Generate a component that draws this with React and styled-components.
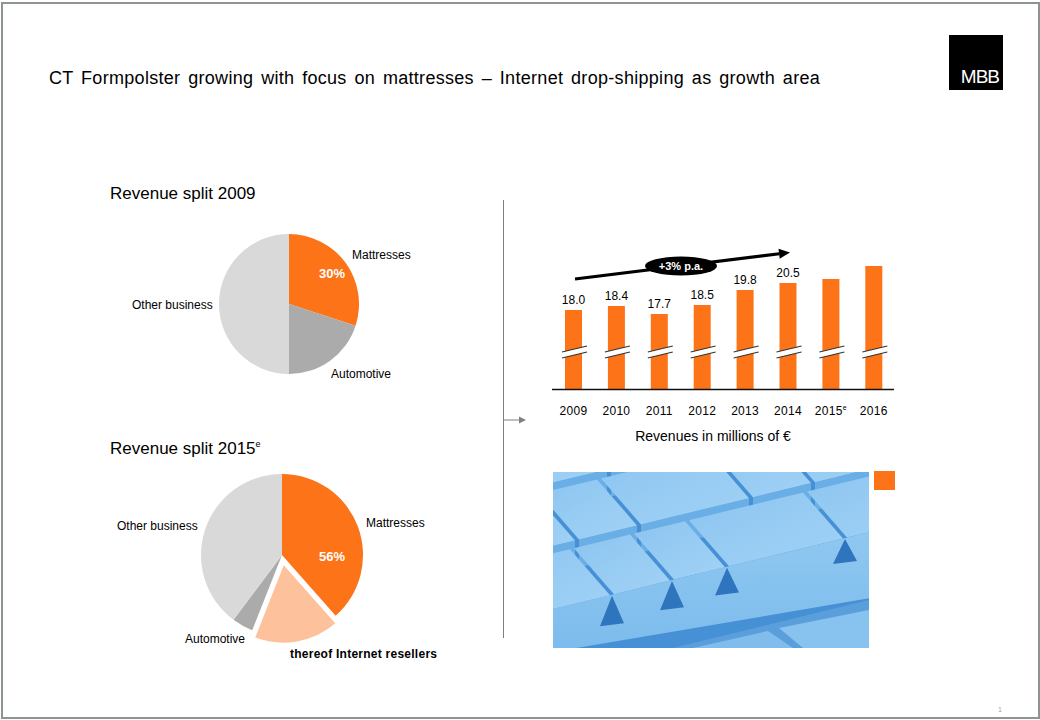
import React from 'react';
import styled, { createGlobalStyle } from 'styled-components';

const ORANGE = '#fc7318';
const PEACH = '#fdc29c';
const MID_GREY = '#ababab';
const LIGHT_GREY = '#d9d9d9';

const GlobalStyle = createGlobalStyle`
  body {
    margin: 0;
    background: #fff;
    font-family: "Liberation Sans", Arial, sans-serif;
    color: #000;
  }
`;

const Slide = styled.div`
  box-sizing: border-box;
  width: 1039px;
  height: 717px;
  margin: 2px 0 0 1px;
  border: 2px solid #8e9393;
  display: flex;
  flex-direction: column;
`;

const Header = styled.header`
  display: flex;
  justify-content: space-between;
  align-items: flex-end;
  padding: 31px 35px 0 46px;
`;

const Title = styled.h1`
  margin: 0 0 1px;
  font-size: 18px;
  line-height: 22px;
  font-weight: normal;
  letter-spacing: 0.3px;
  word-spacing: 2.5px;
`;

const Logo = styled.div`
  width: 54px;
  height: 55px;
  background: #000;
  color: #fff;
  display: flex;
  align-items: flex-end;
  justify-content: flex-end;
  box-sizing: border-box;
  padding: 0 4px 3px 0;
  font-size: 19px;
  letter-spacing: -1px;
  line-height: 20px;
`;

const Main = styled.main`
  display: flex;
  align-items: flex-start;
  margin-top: 94px;
  padding-left: 107px;
`;

const LeftColumn = styled.section`
  width: 393px;
  display: flex;
  flex-direction: column;
`;

const SplitHeading = styled.h2`
  margin: 0;
  font-size: 17px;
  line-height: 20px;
  font-weight: normal;

  sup {
    font-size: 9px;
    vertical-align: 7px;
    line-height: 0;
  }
`;

const ChartSvg = styled.svg`
  display: block;
  font-family: "Liberation Sans", Arial, sans-serif;
`;

const Divider = styled.div`
  position: relative;
  width: 0;
  height: 438px;
  margin-top: 16px;
  border-left: 1px solid #7f7f7f;
`;

const DividerArrow = styled.svg`
  position: absolute;
  left: 0;
  top: 214px;
`;

const RightColumn = styled.section`
  width: 360px;
  margin-left: 36px;
  display: flex;
  flex-direction: column;
`;

const Caption = styled.div`
  font-size: 14px;
  line-height: 20px;
  text-align: center;
  padding-right: 14px;
`;

const PhotoRow = styled.div`
  display: flex;
  align-items: flex-start;
  gap: 5px;
  margin: 26px 0 0 13px;
`;

const Marker = styled.div`
  width: 21px;
  height: 19px;
  margin-top: -1px;
  background: ${ORANGE};
`;

const Footer = styled.footer`
  margin-top: auto;
  padding: 0 36px 3px 0;
  text-align: right;
  font-size: 7px;
  line-height: 8px;
  color: #a0a0a0;
`;

// angles in degrees, clockwise from 12 o'clock
const pt = (cx, cy, r, a) => {
  const rad = (a * Math.PI) / 180;
  return [cx + r * Math.sin(rad), cy - r * Math.cos(rad)];
};

const slice = (cx, cy, r, a0, a1) => {
  const [x0, y0] = pt(cx, cy, r, a0);
  const [x1, y1] = pt(cx, cy, r, a1);
  const large = a1 - a0 > 180 ? 1 : 0;
  return `M${cx},${cy} L${x0},${y0} A${r},${r} 0 ${large} 1 ${x1},${y1} Z`;
};

const Pie2009 = () => {
  const cx = 179;
  const cy = 100;
  const r = 70;
  return (
    <ChartSvg width="393" height="235" fontSize="12">
      <path d={slice(cx, cy, r, 0, 108)} fill={ORANGE} />
      <path d={slice(cx, cy, r, 108, 180)} fill={MID_GREY} />
      <path d={slice(cx, cy, r, 180, 360)} fill={LIGHT_GREY} />
      <text x="242" y="55">Mattresses</text>
      <text x="222" y="74" textAnchor="middle" fill="#fff" fontWeight="bold" fontSize="13">30%</text>
      <text x="22" y="105">Other business</text>
      <text x="221" y="174">Automotive</text>
    </ChartSvg>
  );
};

const Pie2015 = () => {
  const cx = 172;
  const cy = 96;
  const r = 81;
  const [ox, oy] = pt(0, 0, 8, 170);
  return (
    <ChartSvg width="393" height="210" fontSize="12">
      <path d={slice(cx, cy, r, 0, 138.5)} fill={ORANGE} />
      <path d={slice(cx, cy, r, 201.6, 216.8)} fill={MID_GREY} />
      <path d={slice(cx, cy, r, 216.8, 360)} fill={LIGHT_GREY} />
      <path
        d={slice(cx + ox, cy + oy, r, 138.5, 201.6)}
        fill={PEACH}
        stroke="#fff"
        strokeWidth="2.5"
        strokeLinejoin="round"
      />
      <text x="7" y="71">Other business</text>
      <text x="256" y="68">Mattresses</text>
      <text x="222" y="102" textAnchor="middle" fill="#fff" fontWeight="bold" fontSize="13">56%</text>
      <text x="75" y="184">Automotive</text>
      <text x="180" y="199" fontWeight="bold" letterSpacing="0.25">thereof Internet resellers</text>
    </ChartSvg>
  );
};

const revenue = [
  { year: '2009', value: '18.0', top: 126 },
  { year: '2010', value: '18.4', top: 122 },
  { year: '2011', value: '17.7', top: 130 },
  { year: '2012', value: '18.5', top: 121 },
  { year: '2013', value: '19.8', top: 106 },
  { year: '2014', value: '20.5', top: 99 },
  { year: '2015', value: null, top: 95, estimate: true },
  { year: '2016', value: null, top: 82 },
];

const BASELINE = 205;
const BAR_W = 17;

const RevenueChart = () => (
  <ChartSvg width="360" height="242" fontSize="12">
    {revenue.map((d, i) => {
      const x = 25 + i * 42.9;
      const mid = x + BAR_W / 2;
      return (
        <g key={d.year}>
          <rect x={x} y={d.top} width={BAR_W} height={BASELINE - d.top} fill={ORANGE} />
          <polygon
            points={`${x - 3},${168} ${x + 22},${162} ${x + 22},${168} ${x - 3},${174}`}
            fill="#fff"
          />
          <line x1={x - 3} y1="168" x2={x + 22} y2="162" stroke="#333" strokeWidth="1.2" />
          <line x1={x - 3} y1="174" x2={x + 22} y2="168" stroke="#333" strokeWidth="1.2" />
          {d.value && (
            <text x={mid} y={d.top - 6} textAnchor="middle">
              {d.value}
            </text>
          )}
          <text x={mid} y="231" textAnchor="middle" letterSpacing="0.3">
            {d.year}
            {d.estimate && (
              <tspan fontSize="7" dy="-5">
                e
              </tspan>
            )}
          </text>
        </g>
      );
    })}
    <line x1="12" y1={BASELINE + 0.5} x2="354" y2={BASELINE + 0.5} stroke="#111" strokeWidth="1.5" />

    <line x1="35" y1="95" x2="239.5" y2="69.7" stroke="#000" strokeWidth="3" />
    <polygon points="250,68.4 239.7,74.7 238.5,64.8" fill="#000" />
    <ellipse cx="141" cy="82" rx="36" ry="9.5" fill="#000" />
    <text x="141" y="86" textAnchor="middle" fill="#fff" fontWeight="bold" fontSize="11">
      +3% p.a.
    </text>
  </ChartSvg>
);

// ---- foam photo, drawn as flat facets ----
const rowLine = (j, sx) => 137 - 63.2 * j - 0.243 * sx;
const DEPTH = [-40, -46];
const foamRows = [
  [[-30, 57], [61, 117], [121, 172], [176, 290], [294, 380]],
  [[-60, 22], [26, 84], [88, 196], [200, 258], [262, 400]],
  [[-80, -6], [-2, 54], [58, 160], [164, 230], [234, 400]],
];
const notchXs = [59, 119, 174, 292];
const L2 = sx => 166 - 0.267 * sx;
const L3 = sx => 180 - 0.17 * sx;
const poly = pts => pts.map(p => p.join(',')).join(' ');

const FoamPhoto = () => {
  const backRows = [2, 1];
  return (
    <svg width="316" height="176" viewBox="0 0 316 176" style={{ display: 'block' }}>
      <defs>
        <linearGradient id="slabFace" x1="0" y1="0" x2="0" y2="1">
          <stop offset="0" stopColor="#8fc8f1" />
          <stop offset="1" stopColor="#7cbbec" />
        </linearGradient>
        <linearGradient id="topFace" x1="0" y1="0" x2="1" y2="1">
          <stop offset="0" stopColor="#8cc5f0" />
          <stop offset="1" stopColor="#a2d2f6" />
        </linearGradient>
      </defs>
      <rect width="316" height="176" fill="#4690d5" />
      {backRows.map(j =>
        foamRows[j].map(([s0, s1]) => {
          const a = [s0, rowLine(j, s0)];
          const b = [s1, rowLine(j, s1)];
          return (
            <g key={`${j}-${s0}`}>
              <polygon points={poly([a, b, [b[0], b[1] + 28], [a[0], a[1] + 28]])} fill="#6aaee6" />
              <polygon
                points={poly([a, b, [b[0] + DEPTH[0], b[1] + DEPTH[1]], [a[0] + DEPTH[0], a[1] + DEPTH[1]]])}
                fill="url(#topFace)"
              />
            </g>
          );
        })
      )}
      <polygon points="316,176 316,128 120,176" fill="#5a9fdc" />
      <polygon points="140,176 215,159 240,176" fill="#80bdec" />
      <polygon points="250,176 226,156 316,138 316,176" fill="#88c2ee" />
      <polygon
        points={poly([[0, rowLine(0, 0)], [316, rowLine(0, 316)], [316, L3(316)], [0, L3(0)]])}
        fill="url(#slabFace)"
      />
      {foamRows[0].map(([s0, s1]) => {
        const a = [s0, rowLine(0, s0)];
        const b = [s1, rowLine(0, s1)];
        return (
          <polygon
            key={`0-${s0}`}
            points={poly([a, b, [b[0] + DEPTH[0], b[1] + DEPTH[1]], [a[0] + DEPTH[0], a[1] + DEPTH[1]]])}
            fill="url(#topFace)"
          />
        );
      })}
      {notchXs.map(sx => (
        <polygon
          key={sx}
          points={poly([[sx, rowLine(0, sx) + 1], [sx - 12, L2(sx) + 4], [sx + 12, L2(sx) + 1]])}
          fill="#2f75bd"
        />
      ))}
    </svg>
  );
};

const App = () => (
  <>
    <GlobalStyle />
    <Slide>
      <Header>
        <Title>CT Formpolster growing with focus on mattresses – Internet drop-shipping as growth area</Title>
        <Logo>MBB</Logo>
      </Header>
      <Main>
        <LeftColumn>
          <SplitHeading>Revenue split 2009</SplitHeading>
          <Pie2009 />
          <SplitHeading>
            Revenue split 2015<sup>e</sup>
          </SplitHeading>
          <Pie2015 />
        </LeftColumn>
        <Divider>
          <DividerArrow width="24" height="12">
            <line x1="0" y1="6" x2="16" y2="6" stroke="#808080" strokeWidth="1" />
            <polygon points="15,2.5 22,6 15,9.5" fill="#808080" />
          </DividerArrow>
        </Divider>
        <RightColumn>
          <RevenueChart />
          <Caption>Revenues in millions of €</Caption>
          <PhotoRow>
            <FoamPhoto />
            <Marker />
          </PhotoRow>
        </RightColumn>
      </Main>
      <Footer>1</Footer>
    </Slide>
  </>
);

export default App;
